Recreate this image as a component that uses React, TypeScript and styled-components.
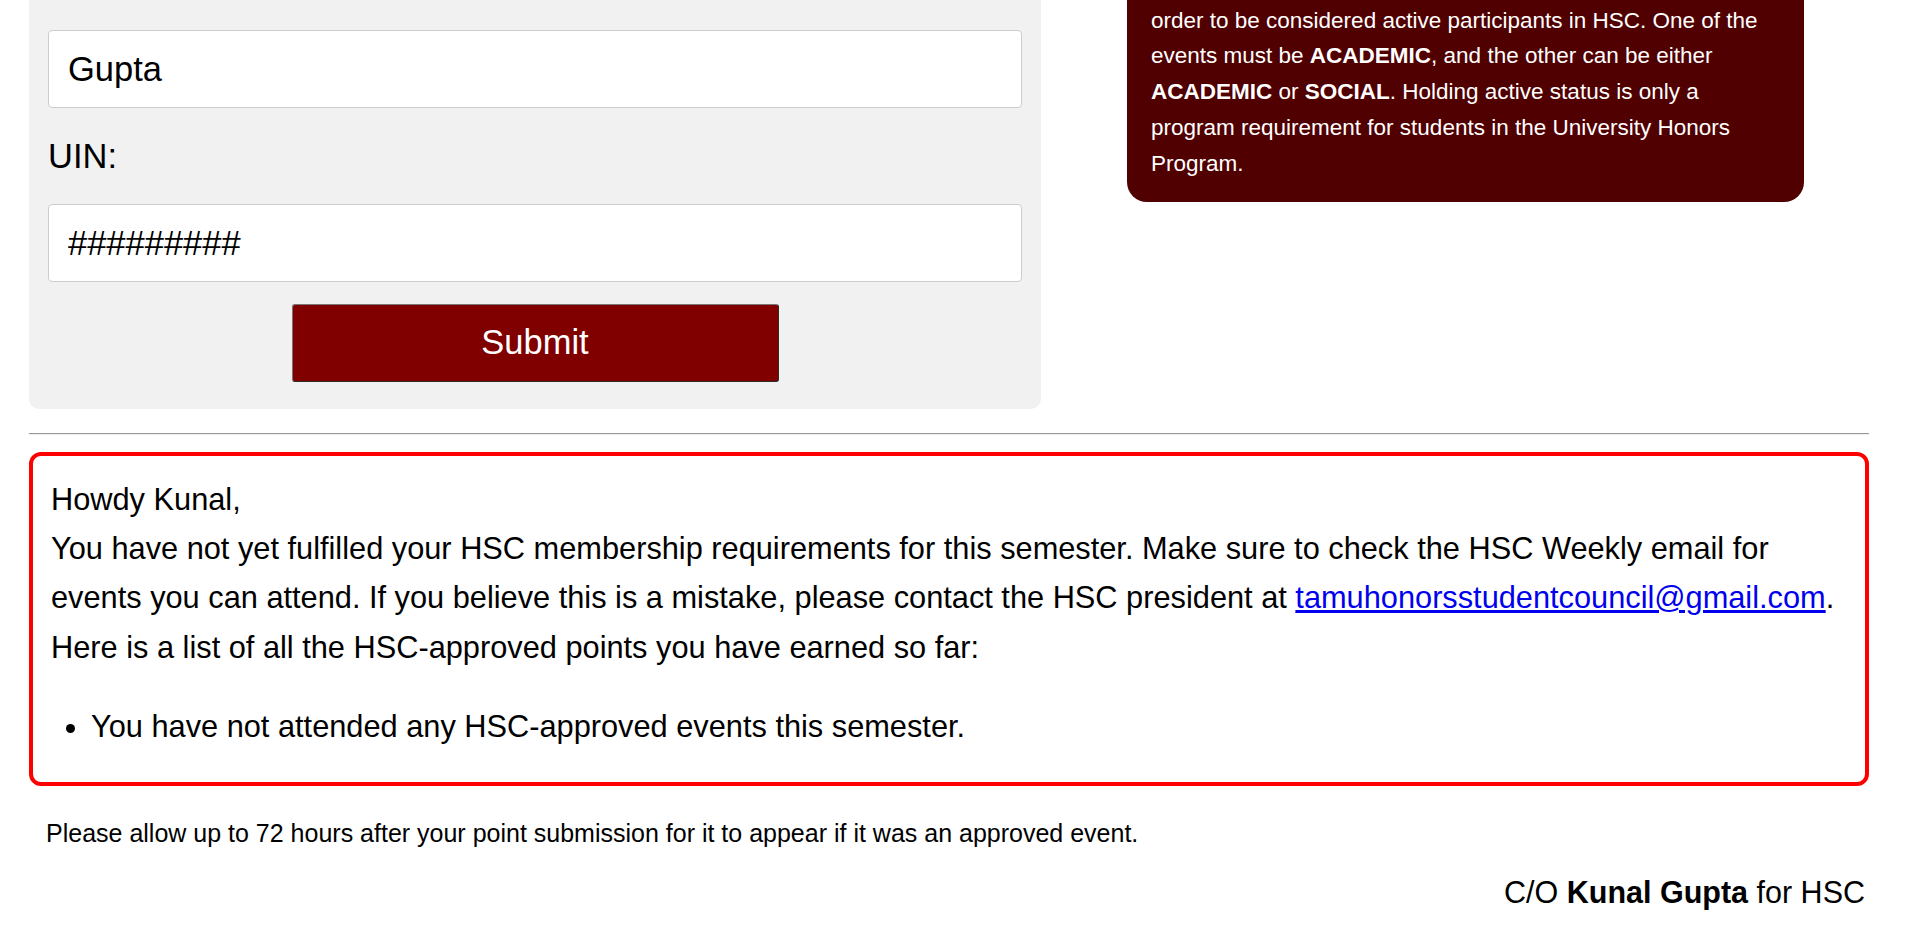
import { useLayoutEffect } from 'react'
import styled, { createGlobalStyle } from 'styled-components'

const GlobalStyle = createGlobalStyle`
  html, body {
    margin: 0;
    padding: 0;
    background: #ffffff;
  }
  body {
    font-family: "Liberation Sans", Arial, sans-serif;
    color: #000000;
  }
  html::-webkit-scrollbar {
    width: 17px;
    background: #f1f1f1;
  }
  html::-webkit-scrollbar-thumb {
    background: #c1c1c1;
    border: 2px solid #f1f1f1;
    border-width: 17px 2px;
  }
`

const Page = styled.div`
  width: 1840px;
  margin-left: 29px;
`

const Header = styled.header`
  height: 92px;
  display: flex;
  align-items: center;
`

const Title = styled.h1`
  margin: 0;
  font-size: 40px;
  color: #500000;
`

const TopRow = styled.div`
  display: flex;
  align-items: flex-start;
`

const FormPanel = styled.form`
  width: 55%;
  box-sizing: border-box;
  display: flex;
  flex-direction: column;
  padding: 28px 19px 27.5px;
  background: #f1f1f1;
  border-radius: 10px;
`

const FieldLabel = styled.label`
  display: block;
  margin: 28.5px 0;
  font-size: 34.5px;
  line-height: normal;
`

const TextInput = styled.input`
  width: 100%;
  height: 78px;
  box-sizing: border-box;
  padding: 0 19px;
  border: 1px solid #cccccc;
  border-radius: 4px;
  background: #ffffff;
  font-family: "Liberation Sans", Arial, sans-serif;
  font-size: 34.5px;
  color: #000000;
  outline: none;
`

const SubmitButton = styled.button`
  align-self: center;
  width: 50%;
  height: 78px;
  margin-top: 21.5px;
  background: #800000;
  color: #ffffff;
  font-family: "Liberation Sans", Arial, sans-serif;
  font-size: 34.5px;
  border: 1px solid;
  border-color: #767676 #2b2b2b #2b2b2b #767676;
  border-radius: 3px;
  cursor: pointer;
`

const InfoColumn = styled.div`
  width: 45%;
  box-sizing: border-box;
  padding-left: 86px;
`

const InfoBox = styled.div`
  width: 677px;
  box-sizing: border-box;
  padding: 25px 20px 20px 24px;
  background: #500000;
  color: #ffffff;
  border-radius: 20px;
  font-size: 22.5px;
  line-height: 1.593;
`

const Divider = styled.hr`
  margin: 24px 0 17px;
  border: none;
  border-top: 1px solid #9a9a9a;
  border-bottom: 1px solid #eeeeee;
`

const StatusBox = styled.section`
  border: 4px solid #ff0000;
  border-radius: 12px;
  padding: 19px 18px 0;
  font-size: 30.75px;
  line-height: 1.6;
`

const StatusText = styled.p`
  margin: 0;
`

const EmailLink = styled.a`
  color: #0000ee;
  text-decoration: underline;
`

const PointList = styled.ul`
  margin: 30.4px 0;
  padding-left: 40px;
`

const Note = styled.p`
  margin: 33px 0 0 17px;
  font-size: 25px;
  line-height: normal;
`

const Signature = styled.p`
  margin: 27px 0 0;
  padding: 0 4px 32.4px 0;
  text-align: right;
  font-size: 30.5px;
  line-height: normal;
`

export default function App() {
  useLayoutEffect(() => {
    const toBottom = () => window.scrollTo(0, document.documentElement.scrollHeight)
    toBottom()
    requestAnimationFrame(toBottom)
  }, [])

  return (
    <>
      <GlobalStyle />
      <Page>
        <Header>
          <Title>HSC Points Checker</Title>
        </Header>

        <TopRow>
          <FormPanel onSubmit={(e) => e.preventDefault()}>
            <FieldLabel htmlFor="lastName">Last Name:</FieldLabel>
            <TextInput id="lastName" defaultValue="Gupta" />
            <FieldLabel htmlFor="uin">UIN:</FieldLabel>
            <TextInput id="uin" defaultValue="#########" />
            <SubmitButton type="submit">Submit</SubmitButton>
          </FormPanel>

          <InfoColumn>
            <InfoBox>
              Students must attend at least <b>TWO</b> HSC-approved events each semester in
              <br />
              order to be considered active participants in HSC. One of the
              <br />
              events must be <b>ACADEMIC</b>, and the other can be either
              <br />
              <b>ACADEMIC</b> or <b>SOCIAL</b>. Holding active status is only a
              <br />
              program requirement for students in the University Honors
              <br />
              Program.
            </InfoBox>
          </InfoColumn>
        </TopRow>

        <Divider />

        <StatusBox>
          <StatusText>
            Howdy Kunal,
            <br />
            You have not yet fulfilled your HSC membership requirements for this semester. Make sure to check the HSC Weekly email for
            <br />
            events you can attend. If you believe this is a mistake, please contact the HSC president at{' '}
            <EmailLink href="mailto:tamuhonorsstudentcouncil@gmail.com">tamuhonorsstudentcouncil@gmail.com</EmailLink>.
            <br />
            Here is a list of all the HSC-approved points you have earned so far:
          </StatusText>
          <PointList>
            <li>You have not attended any HSC-approved events this semester.</li>
          </PointList>
        </StatusBox>

        <Note>Please allow up to 72 hours after your point submission for it to appear if it was an approved event.</Note>
        <Signature>
          C/O <b>Kunal Gupta</b> for HSC
        </Signature>
      </Page>
    </>
  )
}
